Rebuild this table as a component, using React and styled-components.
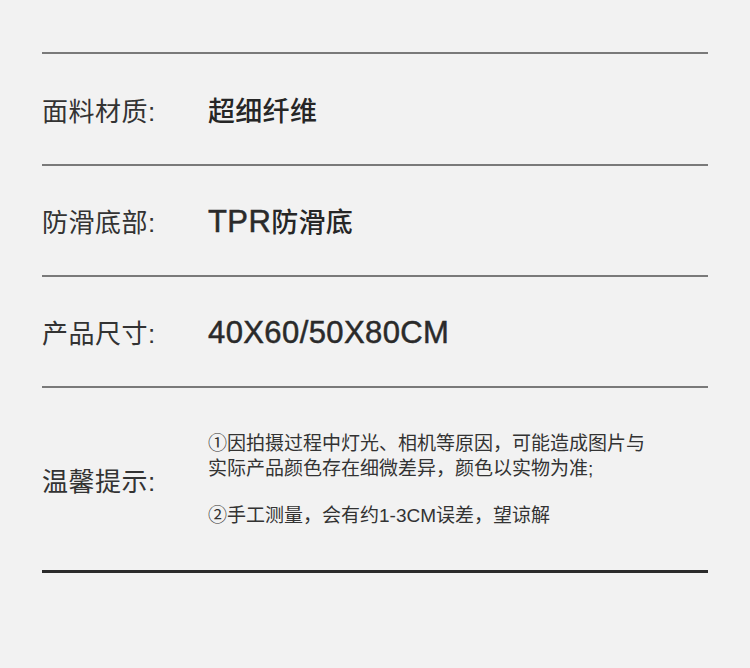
import React from "react";
import styled, { createGlobalStyle } from "styled-components";

const Global = createGlobalStyle`
  html, body { margin: 0; padding: 0; background: #f2f2f2; }
  body { font-family: "Noto Sans CJK SC", "Noto Sans", sans-serif; }
`;

const Page = styled.div`
  width: 750px;
  height: 668px;
  background: #f2f2f2;
  padding: 52px 42px 0;
  box-sizing: border-box;
`;

const Table = styled.div`
  border-top: 2px solid #7a7a7a;
  display: flex;
  flex-direction: column;
`;

const Row = styled.div`
  display: grid;
  grid-template-columns: 166px 1fr;
  align-items: center;
  height: ${(p) => p.$h}px;
  border-bottom: ${(p) => (p.$last ? "3px solid #2b2b2b" : "2px solid #7a7a7a")};
`;

const Label = styled.div`
  font-family: "Liberation Sans", "Noto Sans CJK SC", sans-serif;
  font-size: 26px;
  font-weight: 400;
  color: #333;
  letter-spacing: 0.5px;
`;

const Value = styled.div`
  font-size: 27px;
  font-weight: 500;
  color: #262626;
  letter-spacing: 0.3px;
`;

const Latin = styled.span`
  font-family: "Liberation Sans", Arial, sans-serif;
  font-size: 31px;
  font-weight: 400;
  letter-spacing: 0.4px;
  color: #2a2a2a;
  -webkit-text-stroke: 0.5px #2a2a2a;
`;

const Notes = styled.div`
  display: flex;
  flex-direction: column;
  gap: 22px;
`;

const Note = styled.p`
  margin: 0;
  font-family: "Liberation Sans", "Noto Sans CJK SC", sans-serif;
  font-size: 19px;
  line-height: 25px;
  color: #333;
`;

export default function App() {
  const rows = [
    ["面料材质:", <>超细纤维</>, 110],
    ["防滑底部:", <><Latin>TPR</Latin>防滑底</>, 109],
    ["产品尺寸:", <Latin>40X60/50X80CM</Latin>, 109],
  ];
  return (
    <>
      <Global />
      <Page>
        <Table>
          {rows.map(([l, v, h]) => (
            <Row key={l} $h={h}>
              <Label>{l}</Label>
              <Value>{v}</Value>
            </Row>
          ))}
          <Row $h={182} $last>
            <Label>温馨提示:</Label>
            <Notes>
              <Note>
                ①因拍摄过程中灯光、相机等原因，可能造成图片与
                <br />
                实际产品颜色存在细微差异，颜色以实物为准;
              </Note>
              <Note>②手工测量，会有约1-3CM误差，望谅解</Note>
            </Notes>
          </Row>
        </Table>
      </Page>
    </>
  );
}
